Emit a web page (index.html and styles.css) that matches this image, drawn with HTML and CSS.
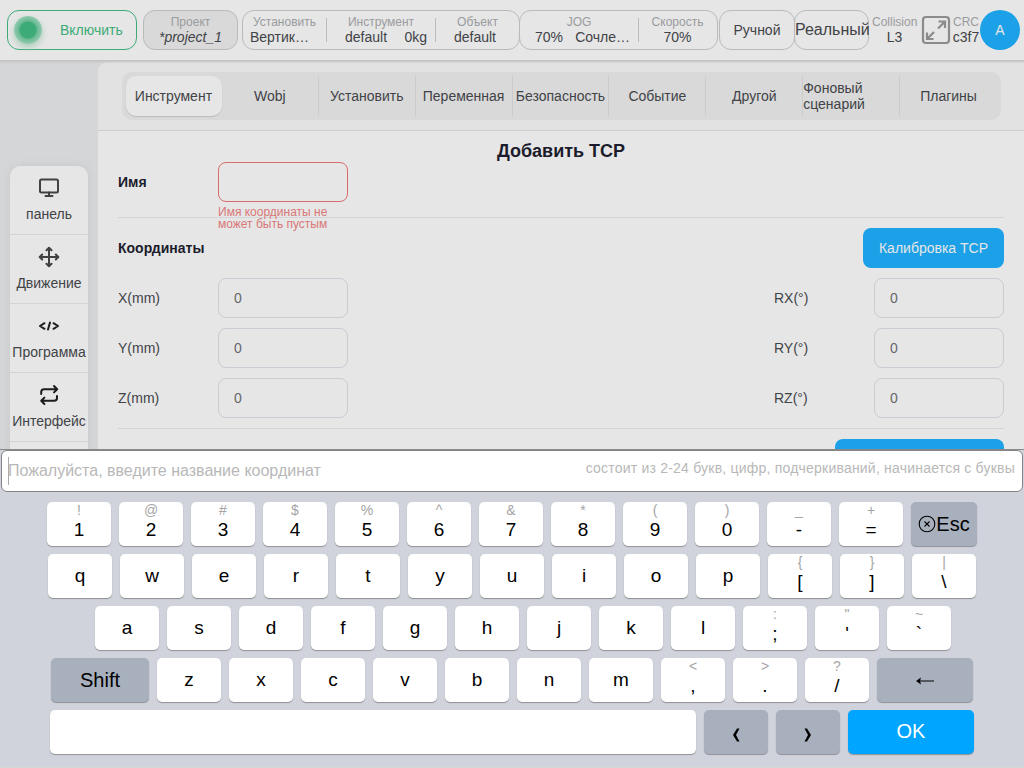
FILE: index.html
```html
<!DOCTYPE html>
<html lang="ru">

<head>
    <meta charset="UTF-8">
    <meta name="viewport" content="width=device-width, initial-scale=1.0">
    <title>Добавить TCP</title>
    <link rel="stylesheet" href="styles.css">
</head>

<body>

    <header class="topbar">
        <button class="power"><span class="lamp"></span><span class="power-text">Включить</span></button>
        <div class="box project">
            <span class="label">Проект</span>
            <span class="value italic">*project_1</span>
        </div>
        <div class="box group settings">
            <div class="cell mount"><span class="label">Установить</span><span class="value">Вертик…</span></div>
            <div class="cell tool"><span class="label">Инструмент</span><span class="value pair"><span>default</span><span>0kg</span></span></div>
            <div class="cell object"><span class="label">Объект</span><span class="value">default</span></div>
        </div>
        <div class="box group motion">
            <div class="cell jog"><span class="label">JOG</span><span class="value pair"><span>70%</span><span>Сочле…</span></span></div>
            <div class="cell speed"><span class="label">Скорость</span><span class="value">70%</span></div>
        </div>
        <button class="box mode">Ручной</button>
        <button class="box real">Реальный</button>
        <div class="info collision"><span class="label">Collision</span><span class="value">L3</span></div>
        <svg class="fullscreen" viewBox="0 0 30 30">
            <rect x="2" y="2" width="26" height="26" rx="3"/>
            <path d="M17.500 6.500h6.500V13M24 6.500l-7 7M6 17.500V24h6.500M6 24l7-7"/>
        </svg>
        <div class="info crc"><span class="label">CRC</span><span class="value">c3f7</span></div>
        <div class="avatar">A</div>
    </header>

    <div class="workspace">
        <nav class="sidebar">
            <a class="side-item">
                <svg viewBox="0 0 24 24"><rect x="3" y="3.500" width="18" height="13" rx="1.500"/><path d="M12 16.500v3.500M8.500 20h7"/></svg>
                <span>панель</span>
            </a>
            <a class="side-item">
                <svg viewBox="0 0 24 24"><path d="M12 3v18M3 12h18M9.500 5.200L12 2.700l2.500 2.500M9.500 18.800l2.500 2.500 2.500-2.500M5.200 9.500L2.700 12l2.500 2.500M18.800 9.500l2.500 2.500-2.500 2.500"/></svg>
                <span>Движение</span>
            </a>
            <a class="side-item dark">
                <svg viewBox="0 0 24 24"><path d="M7.500 9.200L3 12l4.500 2.800M16.500 9.200L21 12l-4.500 2.800M13 8.500l-2 7"/></svg>
                <span>Программа</span>
            </a>
            <a class="side-item dark">
                <svg viewBox="0 0 24 24"><path d="M17 3l3.200 3.200L17 9.400M4.200 11V9a2.800 2.800 0 0 1 2.800-2.800h13M7.400 14.600L4.200 17.800 7.400 21M20 13v2a2.800 2.800 0 0 1-2.800 2.800h-13"/></svg>
                <span>Интерфейс</span>
            </a>
            <a class="side-item"></a>
        </nav>

        <main class="panel">
            <div class="tabs-wrap">
                <div class="tabs">
                    <a class="tab active">Инструмент</a>
                    <a class="tab">Wobj</a>
                    <a class="tab">Установить</a>
                    <a class="tab">Переменная</a>
                    <a class="tab">Безопасность</a>
                    <a class="tab">Событие</a>
                    <a class="tab">Другой</a>
                    <a class="tab">Фоновый сценарий</a>
                    <a class="tab">Плагины</a>
                </div>
            </div>

            <div class="form">
                <h1>Добавить TCP</h1>
                <div class="name-row">
                    <span class="bold">Имя</span>
                    <div class="name-field">
                        <div class="field invalid"></div>
                        <p class="error">Имя координаты не может быть пустым</p>
                    </div>
                </div>
                <div class="section-head">
                    <span class="bold">Координаты</span>
                    <button class="primary">Калибровка TCP</button>
                </div>
                <div class="row"><span>X(mm)</span><div class="field">0</div><span class="second">RX(°)</span><div class="field">0</div></div>
                <div class="row"><span>Y(mm)</span><div class="field">0</div><span class="second">RY(°)</span><div class="field">0</div></div>
                <div class="row"><span>Z(mm)</span><div class="field">0</div><span class="second">RZ(°)</span><div class="field">0</div></div>
                <div class="section-head next">
                    <button class="primary wide"></button>
                </div>
            </div>
        </main>
    </div>

    <div class="keyboard">
        <div class="entry">
            <span class="placeholder">Пожалуйста, введите название координат</span>
            <span class="hint">состоит из 2-24 букв, цифр, подчеркиваний, начинается с буквы</span>
        </div>
        <div class="keys">
            <div class="key-row">
                <div class="key double"><small>!</small>1</div>
                <div class="key double"><small>@</small>2</div>
                <div class="key double"><small>#</small>3</div>
                <div class="key double"><small>$</small>4</div>
                <div class="key double"><small>%</small>5</div>
                <div class="key double"><small>^</small>6</div>
                <div class="key double"><small>&amp;</small>7</div>
                <div class="key double"><small>*</small>8</div>
                <div class="key double"><small>(</small>9</div>
                <div class="key double"><small>)</small>0</div>
                <div class="key double"><small>_</small>-</div>
                <div class="key double"><small>+</small>=</div>
                <div class="key grey esc">
                    <svg viewBox="0 0 18 18"><circle cx="9" cy="9" r="7.800"/><path d="M6.500 6.500l5 5M11.500 6.500l-5 5"/></svg><span>Esc</span>
                </div>
            </div>
            <div class="key-row">
                <div class="key">q</div>
                <div class="key">w</div>
                <div class="key">e</div>
                <div class="key">r</div>
                <div class="key">t</div>
                <div class="key">y</div>
                <div class="key">u</div>
                <div class="key">i</div>
                <div class="key">o</div>
                <div class="key">p</div>
                <div class="key double"><small>{</small>[</div>
                <div class="key double"><small>}</small>]</div>
                <div class="key double"><small>|</small>\</div>
            </div>
            <div class="key-row shifted">
                <div class="key">a</div>
                <div class="key">s</div>
                <div class="key">d</div>
                <div class="key">f</div>
                <div class="key">g</div>
                <div class="key">h</div>
                <div class="key">j</div>
                <div class="key">k</div>
                <div class="key">l</div>
                <div class="key double"><small>:</small>;</div>
                <div class="key double"><small>"</small>'</div>
                <div class="key double"><small>~</small>`</div>
            </div>
            <div class="key-row">
                <div class="key grey shift">Shift</div>
                <div class="key">z</div>
                <div class="key">x</div>
                <div class="key">c</div>
                <div class="key">v</div>
                <div class="key">b</div>
                <div class="key">n</div>
                <div class="key">m</div>
                <div class="key double"><small>&lt;</small>,</div>
                <div class="key double"><small>&gt;</small>.</div>
                <div class="key double"><small>?</small>/</div>
                <div class="key grey back">
                    <svg viewBox="0 0 20 10"><path class="line" d="M3 5h16"/><path d="M1 5l5-3.500-1 3.500 1 3.500z"/></svg>
                </div>
            </div>
            <div class="key-row">
                <div class="key space"></div>
                <div class="key grey arrow"><svg viewBox="0 0 8 14"><path d="M5 .500H7.500L4 7l3.500 6.500H5L1 7z"/></svg></div>
                <div class="key grey arrow"><svg viewBox="0 0 8 14"><path d="M3 .500H.500L4 7 .500 13.500H3L7 7z"/></svg></div>
                <div class="key ok">OK</div>
            </div>
        </div>
    </div>

</body>

</html>
```
FILE: styles.css
```css
:root {
    --panel: #e6e6e6;
    --line: #d4d4d6;
    --text: #414347;
    --muted: #9a9b9e;
    --blue: #1ca1e8;
    --green: #3dab77;
}

* {
    margin: 0;
    padding: 0;
    box-sizing: border-box;
}

body {
    width: 1024px;
    height: 768px;
    overflow: hidden;
    display: flex;
    flex-direction: column;
    background-color: #d5d6d8;
    color: var(--text);
    font-family: "Liberation Sans", Arial, sans-serif;
    font-size: 14px;
}

button {
    font-family: inherit;
    font-size: 14px;
    color: inherit;
    background: none;
    border: none;
}

/* top bar */
.topbar {
    flex: none;
    display: flex;
    align-items: center;
    height: 60px;
    padding-left: 7px;
    background-color: var(--panel);
    box-shadow: 0 1px 2px 1px #c4c4c6;
    z-index: 1;
}

.label, .value {
    display: block;
    white-space: nowrap;
}

.label {
    font-size: 12px;
    line-height: 16px;
    color: var(--muted);
}

.value {
    line-height: 15px;
}

.power {
    display: flex;
    align-items: center;
    width: 130px;
    height: 40px;
    padding-left: 6px;
    border: 1px solid var(--green);
    border-radius: 12px;
    color: var(--green);
}

.lamp {
    width: 28px;
    height: 28px;
    border-radius: 50%;
    background: radial-gradient(circle, var(--green) 8px, #67b892 9px, #93cbb0 14px);
    box-shadow: 0 3px 6px #a9cdbb;
}

.power-text {
    margin-left: 18px;
}

.box {
    height: 40px;
    border: 1px solid #b9babb;
    border-radius: 12px;
    text-align: center;
}

.project {
    width: 95px;
    margin-left: 6px;
    padding-top: 3px;
    background-color: #d9d9d9;
}

.italic {
    font-style: italic;
}

.group {
    display: flex;
}

.settings {
    width: 278px;
    margin-left: 4px;
}

.motion {
    width: 199px;
    margin-left: -1px;
}

.cell {
    position: relative;
    padding-top: 3px;
}

/* short separator between the cells */
.cell + .cell::before {
    content: "";
    position: absolute;
    left: 0;
    top: 7px;
    width: 1px;
    height: 24px;
    background-color: #bbbcbe;
}

.mount {
    width: 83px;
}

.mount .value {
    padding-left: 7px;
    text-align: left;
}

.tool {
    width: 109px;
}

.pair {
    display: flex;
    justify-content: space-between;
}

.tool .label {
    padding-left: 1px;
}

.tool .pair {
    padding: 0 8px 0 19px;
}

.object {
    width: 84px;
}

.object .label {
    padding-left: 1px;
}

.object .value {
    padding-right: 4px;
}

.jog {
    width: 118px;
}

.jog .pair {
    padding: 0 8px 0 15px;
}

.speed {
    width: 79px;
}

.mode {
    width: 76px;
    margin-left: 1px;
}

.real {
    width: 75px;
    margin-left: -1px;
    font-size: 16px;
    white-space: nowrap;
}

.info {
    height: 40px;
    padding-top: 4px;
    text-align: center;
}

.collision {
    width: 45px;
    margin-left: 3px;
}

.fullscreen {
    flex: none;
    width: 30px;
    height: 30px;
    margin-left: 4px;
    fill: none;
    stroke: #8b8b8b;
    stroke-width: 2.2;
}

.crc {
    width: 28px;
    margin-left: 1px;
}

.avatar {
    flex: none;
    width: 40px;
    height: 40px;
    border-radius: 50%;
    background-color: var(--blue);
    color: #e6e6e6;
    line-height: 41px;
    text-align: center;
}

/* workspace */
.workspace {
    display: flex;
    height: 389px;
    overflow: hidden;
}

.sidebar {
    flex: none;
    width: 78px;
    height: 420px;
    margin: 106px 10px 0;
    border-radius: 10px 10px 0 0;
    background-color: var(--panel);
    box-shadow: 0 0 8px #c6c7c9;
    overflow: hidden;
}

.side-item {
    display: flex;
    flex-direction: column;
    align-items: center;
    height: 69px;
    padding-top: 10px;
    border-bottom: 1px solid var(--line);
}

.side-item svg {
    width: 24px;
    height: 24px;
    margin-bottom: 6px;
    fill: none;
    stroke: #414141;
    stroke-width: 2;
    stroke-linecap: round;
    stroke-linejoin: round;
}

.side-item.dark svg {
    stroke: #1c1c1c;
}

.panel {
    flex: 1;
    margin-top: 2px;
    border-radius: 10px 0 0 0;
    background-color: var(--panel);
    overflow: hidden;
}

.tabs-wrap {
    height: 69px;
    padding: 10px 23px 10px 24px;
    background-color: #e2e2e2;
    border-bottom: 1px solid #cfcfd0;
}

.tabs {
    display: grid;
    grid-template-columns: repeat(9, 1fr);
    height: 48px;
    padding: 4px 4px 4px 3px;
    border-radius: 10px;
    background-color: #d9d9d9;
}

.tab {
    display: flex;
    align-items: center;
    justify-content: center;
    line-height: 16px;
    border-right: 1px solid #cbcbcc;
}

.tab:last-child {
    border-right: none;
}

.tab.active {
    margin-left: 1px;
    padding-right: 1px;
    border: none;
    border-radius: 10px;
    background-color: var(--panel);
    box-shadow: 0 1px 1px #bcbcbc;
}

.form {
    padding: 10px 20px 0;
}

h1 {
    height: 21px;
    color: #1b1b2b;
    font-size: 18px;
    line-height: 21px;
    text-align: center;
}

.bold {
    color: #1b1b2b;
    font-weight: bold;
}

.name-row {
    display: flex;
    height: 56px;
    border-bottom: 1px solid var(--line);
    line-height: 40px;
}

.name-row .bold {
    width: 100px;
}

.name-field {
    width: 130px;
}

.field {
    width: 130px;
    height: 40px;
    padding-left: 15px;
    border: 1px solid #cbccd3;
    border-radius: 8px;
    line-height: 38px;
    color: #65666a;
}

.field.invalid {
    border-color: #d66c6c;
}

.error {
    padding-top: 4px;
    color: #d97777;
    font-size: 12px;
    line-height: 12px;
}

.section-head {
    display: flex;
    justify-content: space-between;
    padding: 10px 0;
    line-height: 40px;
}

.primary {
    width: 141px;
    height: 40px;
    border-radius: 8px;
    background-color: var(--blue);
    color: #e6e6e6;
}

.primary.wide {
    width: 169px;
}

.row {
    display: grid;
    grid-template-columns: 100px 130px 1fr 130px;
    height: 50px;
    line-height: 40px;
}

.second {
    justify-self: end;
    width: 100px;
}

.next {
    justify-content: flex-end;
    border-top: 1px solid var(--line);
}

/* on-screen keyboard */
.keyboard {
    height: 317px;
    border-top: 1px solid #88898b;
    background-color: #d0d3dc;
    color: #000;
    z-index: 2;
}

.entry {
    display: flex;
    justify-content: space-between;
    height: 42px;
    margin: 0 1px;
    padding: 0 7px 0 6px;
    border: 1px solid #858585;
    border-radius: 6px;
    background-color: #fff;
    color: #b8b8b8;
}

.placeholder {
    height: 28px;
    margin-top: 6px;
    border-left: 1px solid #aaa;
    font-size: 16px;
    line-height: 28px;
    text-indent: -1px;
}

.hint {
    line-height: 35px;
    letter-spacing: 0.21px;
}

.keys {
    padding-top: 10px;
}

.key-row {
    display: flex;
    justify-content: center;
    gap: 8px;
    height: 44px;
    margin-bottom: 8px;
}

.key-row.shifted {
    padding-left: 22px;
}

.key {
    display: flex;
    flex-direction: column;
    align-items: center;
    justify-content: center;
    width: 64px;
    height: 44px;
    border-radius: 5px;
    background-color: #fff;
    box-shadow: 0 1px 1px #8f9094;
    font-size: 19px;
    line-height: 24px;
}

.key.double {
    padding-bottom: 5px;
}

.key small {
    height: 16px;
    color: #a5a5a5;
    font-size: 14px;
    line-height: 16px;
}

.key.grey {
    background-color: #a8b0be;
}

.key.esc {
    flex-direction: row;
    width: 66px;
    font-size: 20px;
}

.esc svg {
    width: 18px;
    height: 18px;
    fill: none;
    stroke: #000;
    stroke-width: 1.1;
}

.key.shift {
    width: 98px;
    font-size: 20px;
}

.key.back {
    width: 96px;
}

.back svg {
    width: 20px;
    height: 10px;
    margin-top: 2px;
}

.back .line {
    stroke: #000;
    stroke-width: 1;
}

.arrow svg {
    width: 8px;
    height: 14px;
    margin-top: 5px;
}

.key.space {
    width: 646px;
}

.key.ok {
    width: 126px;
    padding-bottom: 2px;
    background-color: #00a5ff;
    color: #fff;
    font-size: 20px;
}
```
